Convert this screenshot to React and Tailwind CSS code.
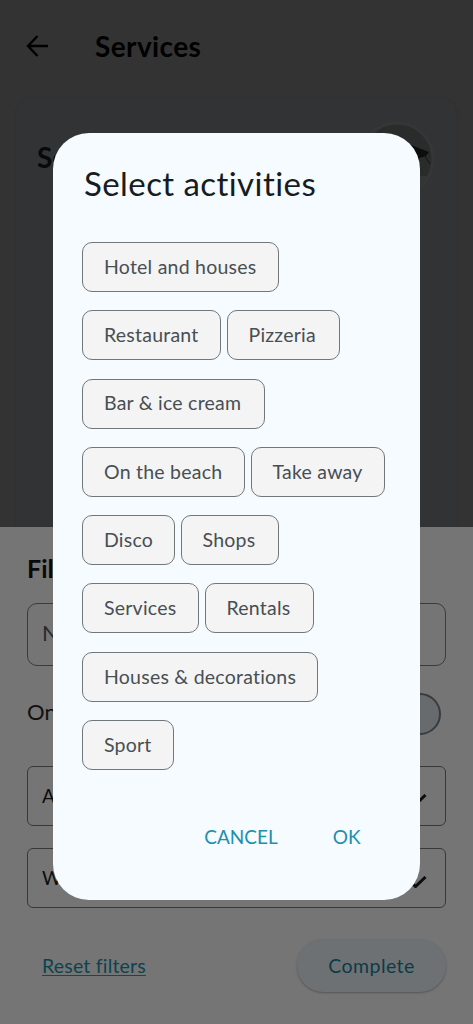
import clsx from 'clsx'

const activityRows = [
    [{ label: 'Hotel and houses', width: 'w-[196.5px]' }],
    [{ label: 'Restaurant', width: 'w-[139px]' }, { label: 'Pizzeria', width: 'w-[113px]' }],
    [{ label: 'Bar & ice cream', width: 'w-[183px]' }],
    [{ label: 'On the beach', width: 'w-[163px]' }, { label: 'Take away', width: 'w-[134.5px]' }],
    [{ label: 'Disco', width: 'w-[93px]' }, { label: 'Shops', width: 'w-[98px]' }],
    [{ label: 'Services', width: 'w-[117px]' }, { label: 'Rentals', width: 'w-[109px]' }],
    [{ label: 'Houses & decorations', width: 'w-[235.5px]' }],
    [{ label: 'Sport', width: 'w-[92px]' }]
]

function Chip({ label, width }) {
    return (
        <button className={clsx('h-[50px] shrink-0 rounded-[10px] border-[1.5px] border-[#70777b] bg-[#f4f4f4] pb-[1px] pl-[21px] text-left text-[19.5px] tracking-[0.23px] whitespace-nowrap text-[#484f53]', width)}>
            {label}
        </button>
    )
}

function SelectField({ label }) {
    return (
        <div className="flex h-[60px] items-center justify-between rounded-[6px] border-[1.5px] border-[#393939] pr-[18px] pl-[14px] text-[19px] text-[#0d0d0d]">
            <span>{label}</span>
            <svg width="23" height="12" viewBox="0 0 23 12" className="mt-2 fill-none stroke-[#0d0d0d] stroke-[3]">
                <path d="M1.5 1L11.5 10.5L21.5 1" />
            </svg>
        </div>
    )
}

function ServiceCard() {
    return (
        <div className="mx-4 flex h-[429px] items-start justify-between rounded-t-[18px] bg-[#323335] pr-[22px] pl-[21px] shadow-[0_1px_3px_#2e2e2e]">
            <h2 className="mt-[41px] text-[28px] leading-9 font-bold text-[#080909]">See</h2>
            <svg width="76" height="76" viewBox="0 0 76 76" className="mt-[23px]">
                <circle cx="38" cy="38" r="36" fill="#292c2b" stroke="#363636" strokeWidth="3" />
                <path d="M38 55H68A34 34 0 0 1 38 72Z" fill="#343535" />
                <path d="M43 20Q54 25 70 31L67 35L57 38L50 41L40 33Z" fill="#0c0e0c" />
                <path d="M65 34L71 43M61 36L57 42" stroke="#111411" strokeWidth="1" />
            </svg>
        </div>
    )
}

function FilterSheet() {
    return (
        <section className="h-[497px] overflow-hidden bg-[#757575] px-[27px]">
            <h3 className="mt-[25px] text-[25px] leading-8 font-bold text-[#090909]">Filters</h3>
            <div className="mt-[19px] flex h-[63px] items-center rounded-[10px] border-[1.5px] border-[#383c3e] pb-1 pl-[14px] text-[22px] text-[#26292b]">
                Name
            </div>
            <div className="mt-[26px] flex h-[43px] items-center justify-between pr-[5px] text-[22px] text-[#111]">
                <span className="mb-1">Only open</span>
                <span className="h-[42px] w-[70px] rounded-full border-[2.5px] border-[#383c3e] bg-[#686b6d]" />
            </div>
            <div className="mt-[31px] flex flex-col gap-[22px]">
                <SelectField label="Activities" />
                <SelectField label="Where" />
            </div>
            <div className="mt-[31px] flex items-center justify-between pl-[15px] text-[19.5px]">
                <button className="border-b-[1.5px] border-[#2c3f43] leading-[19px] tracking-[0.2px] text-[#0d434f]">Reset filters</button>
                <button className="h-[53px] w-[149px] rounded-full bg-[#6e7173] tracking-[0.45px] text-[#0b3b47] shadow-[0_1px_2px_#555]">Complete</button>
            </div>
        </section>
    )
}

function ActivitiesDialog() {
    return (
        <div role="dialog" className="absolute top-[133px] left-[53px] flex h-[767px] w-[367px] flex-col rounded-[36px] bg-[#f5fbff] pl-[29px]">
            <h2 className="mt-[29px] pl-[2px] text-[33px] leading-[42px] tracking-[0.43px] text-[#171c20]">Select activities</h2>
            <div className="mt-[38px] flex flex-col gap-[18.3px]">
                {activityRows.map((row, index) => (
                    <div key={index} className="flex gap-[5.5px]">
                        {row.map((activity) => (
                            <Chip key={activity.label} {...activity} />
                        ))}
                    </div>
                ))}
            </div>
            <div className="mt-[53px] flex justify-end gap-[55px] pr-[59.5px] text-[19px] leading-7 text-[#218fac]">
                <button>CANCEL</button>
                <button>OK</button>
            </div>
        </div>
    )
}

export default function App() {
    return (
        <main className="relative h-[1024px] w-[473px] overflow-hidden bg-[#333333] font-['Lato',sans-serif]">
            <header className="flex h-[98px] items-center gap-[46px] pb-[6px] pl-[26px] text-black">
                <svg width="23" height="22" viewBox="0 0 23 22" className="fill-none stroke-black stroke-[2.4]">
                    <path d="M11.5 1L2 11L11.5 21M2 11H22" />
                </svg>
                <h1 className="text-[28px] leading-9 font-bold tracking-[0.4px]">Services</h1>
            </header>
            <ServiceCard />
            <FilterSheet />
            <ActivitiesDialog />
        </main>
    )
}
